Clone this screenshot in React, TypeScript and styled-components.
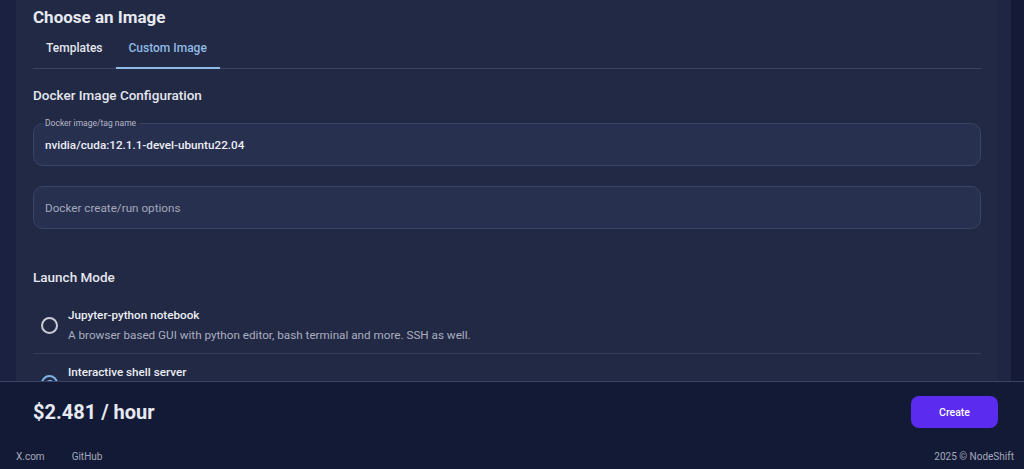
import React from "react";
import styled, { createGlobalStyle } from "styled-components";

const Global = createGlobalStyle`
  html, body { margin: 0; padding: 0; background: #151b36; }
  body { font-family: Roboto, "Noto Sans", Arial, sans-serif; -webkit-font-smoothing: antialiased; }
  * { box-sizing: border-box; }
`;

const Page = styled.div`
  width: 1024px;
  height: 469px;
  display: flex;
  flex-direction: column;
  overflow: hidden;
  background: #131a36;
`;

const ScrollArea = styled.div`
  height: 381px;
  flex: none;
  display: flex;
  background: #1b2140;
  padding-left: 16px;
  overflow: hidden;
`;

const Gutter = styled.div<{ $tone: string }>`
  width: 13px;
  flex: none;
  background: ${(p) => p.$tone};
`;

const Card = styled.div`
  flex: 1;
  background: #222944;
  padding: 5px 17px 0;
  display: flex;
  flex-direction: column;
  & > * {
    flex-shrink: 0;
  }
`;

const Title = styled.h2`
  margin: 0;
  font-size: 17px;
  line-height: 24px;
  font-weight: 700;
  color: #e7e9f1;
`;

const Tabs = styled.div`
  display: flex;
  border-bottom: 1px solid #3a4363;
`;

const Tab = styled.div<{ $active?: boolean }>`
  padding: 0 13px;
  height: 40px;
  display: flex;
  align-items: center;
  font-size: 12px;
  font-weight: 500;
  color: ${(p) => (p.$active ? "#8fbbe6" : "#e4e6ee")};
  border-bottom: 2px solid ${(p) => (p.$active ? "#8fbbe6" : "transparent")};
  margin-bottom: -1px;
`;

const SectionTitle = styled.h3<{ $mt: number }>`
  margin: ${(p) => p.$mt}px 0 0;
  font-size: 13.5px;
  line-height: 20px;
  font-weight: 500;
  color: #e4e6ee;
`;

const Field = styled.div<{ $mt: number }>`
  position: relative;
  margin-top: ${(p) => p.$mt}px;
  height: 43px;
  border: 1px solid #3a4466;
  border-radius: 10px;
  background: #283050;
  display: flex;
  align-items: center;
  padding: 0 11px;
`;

const FieldLabel = styled.span`
  position: absolute;
  top: -6px;
  left: 7px;
  padding: 0 4px;
  font-size: 8.5px;
  line-height: 10px;
  color: #b4b8c8;
  background: linear-gradient(#222944 50%, #283050 50%);
`;

const FieldValue = styled.span<{ $placeholder?: boolean }>`
  font-size: 11.7px;
  font-weight: ${(p) => (p.$placeholder ? 400 : 500)};
  color: ${(p) => (p.$placeholder ? "#a3a8bb" : "#eceef4")};
  margin-top: ${(p) => (p.$placeholder ? 0 : 1)}px;
`;

const Options = styled.div`
  margin-top: 10px;
  display: flex;
  flex-direction: column;
`;

const Option = styled.div<{ $divider?: boolean }>`
  display: flex;
  align-items: center;
  gap: 10px;
  padding: 10px 0 10px 8px;
  border-bottom: ${(p) => (p.$divider ? "1px solid #343d5e" : "none")};
`;

const Radio = styled.span<{ $checked?: boolean }>`
  width: 17px;
  height: 17px;
  flex: none;
  border-radius: 50%;
  border: 2px solid ${(p) => (p.$checked ? "#7fb3e6" : "#c9ccd6")};
  display: flex;
  align-items: center;
  justify-content: center;
  align-self: ${(p) => (p.$checked ? "flex-end" : "center")};
  margin-bottom: ${(p) => (p.$checked ? -12 : 0)}px;
  &::after {
    content: "";
    width: 8px;
    height: 8px;
    border-radius: 50%;
    background: ${(p) => (p.$checked ? "#7fb3e6" : "transparent")};
  }
`;

const OptionText = styled.div`
  display: flex;
  flex-direction: column;
  gap: 4px;
`;

const OptionTitle = styled.span`
  font-size: 11.7px;
  line-height: 16px;
  font-weight: 500;
  color: #eceef4;
`;

const OptionDesc = styled.span`
  font-size: 11.7px;
  line-height: 16px;
  color: #a9aec0;
`;

const Footer = styled.footer`
  flex: 1;
  border-top: 1px solid #3b4466;
  background: #131a36;
  display: flex;
  flex-direction: column;
`;

const PriceRow = styled.div`
  display: flex;
  align-items: center;
  justify-content: space-between;
  padding: 14px 26px 0 33px;
`;

const Price = styled.span`
  font-size: 20px;
  font-weight: 700;
  color: #e7e9f1;
`;

const CreateButton = styled.button`
  width: 87px;
  height: 32px;
  border: none;
  border-radius: 8px;
  background: #5b2bf0;
  color: #ffffff;
  font-family: inherit;
  font-size: 10.5px;
  font-weight: 500;
`;

const LinksRow = styled.div`
  margin-top: auto;
  height: 26px;
  display: flex;
  align-items: center;
  padding: 0 10px 0 16px;
  font-size: 10px;
  color: #a4a9bb;
`;

const FooterLink = styled.span`
  margin-right: 27px;
`;

const Copy = styled.span`
  margin-left: auto;
`;

export default function App() {
  return (
    <Page>
      <Global />
      <ScrollArea>
        <Card>
          <Title>Choose an Image</Title>
          <Tabs>
            <Tab>Templates</Tab>
            <Tab $active>Custom Image</Tab>
          </Tabs>
          <SectionTitle $mt={16}>Docker Image Configuration</SectionTitle>
          <Field $mt={18}>
            <FieldLabel>Docker image/tag name</FieldLabel>
            <FieldValue>nvidia/cuda:12.1.1-devel-ubuntu22.04</FieldValue>
          </Field>
          <Field $mt={20}>
            <FieldValue $placeholder>Docker create/run options</FieldValue>
          </Field>
          <SectionTitle $mt={38}>Launch Mode</SectionTitle>
          <Options>
            <Option $divider>
              <Radio />
              <OptionText>
                <OptionTitle>Jupyter-python notebook</OptionTitle>
                <OptionDesc>A browser based GUI with python editor, bash terminal and more. SSH as well.</OptionDesc>
              </OptionText>
            </Option>
            <Option>
              <Radio $checked />
              <OptionText>
                <OptionTitle>Interactive shell server</OptionTitle>
              </OptionText>
            </Option>
          </Options>
        </Card>
        <Gutter $tone="#1f2643" />
        <Gutter $tone="#151b36" />
      </ScrollArea>
      <Footer>
        <PriceRow>
          <Price>$2.481 / hour</Price>
          <CreateButton>Create</CreateButton>
        </PriceRow>
        <LinksRow>
          <FooterLink>X.com</FooterLink>
          <FooterLink>GitHub</FooterLink>
          <Copy>2025 © NodeShift</Copy>
        </LinksRow>
      </Footer>
    </Page>
  );
}
